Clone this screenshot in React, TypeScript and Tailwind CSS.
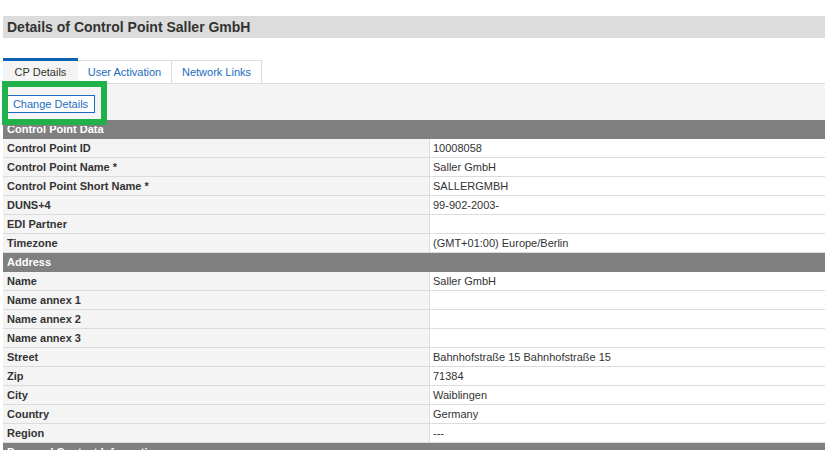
import React from "react";

interface Row {
	label: string;
	value: string;
}

interface Section {
	title: string;
	rows: Row[];
}

const sections: Section[] = [
	{
		title: "Control Point Data",
		rows: [
			{ label: "Control Point ID", value: "10008058" },
			{ label: "Control Point Name *", value: "Saller GmbH" },
			{ label: "Control Point Short Name *", value: "SALLERGMBH" },
			{ label: "DUNS+4", value: "99-902-2003-" },
			{ label: "EDI Partner", value: "" },
			{ label: "Timezone", value: "(GMT+01:00) Europe/Berlin" },
		],
	},
	{
		title: "Address",
		rows: [
			{ label: "Name", value: "Saller GmbH" },
			{ label: "Name annex 1", value: "" },
			{ label: "Name annex 2", value: "" },
			{ label: "Name annex 3", value: "" },
			{ label: "Street", value: "Bahnhofstraße 15 Bahnhofstraße 15" },
			{ label: "Zip", value: "71384" },
			{ label: "City", value: "Waiblingen" },
			{ label: "Country", value: "Germany" },
			{ label: "Region", value: "---" },
		],
	},
	{
		title: "Personal Contact Information",
		rows: [],
	},
];

const tabs = [
	{ name: "CP Details", w: "w-[75px]" },
	{ name: "User Activation", w: "w-[94px]" },
	{ name: "Network Links", w: "w-[90px]" },
];

export default function App() {
	return (
		<div
			className="relative w-[825px] h-[450px] overflow-hidden bg-white pl-[3px] pt-4 text-[11px] text-[#333]"
			style={{ fontFamily: '"Liberation Sans", Arial, sans-serif' }}
		>
			<div className="h-[22px] bg-[#dcdcdc] flex items-center pl-[4px] text-[14px] font-bold text-[#333]">
				Details of Control Point Saller GmbH
			</div>

			<div className="mt-[20px] h-[25px] flex items-end">
				{tabs.map((t, i) =>
					i === 0 ? (
						<div
							key={t.name}
							className={`${t.w} h-[25px] border-t-[3px] border-[#0a62b0] bg-[#f4f4f4] flex items-center justify-center text-[#333]`}
						>
							{t.name}
						</div>
					) : (
						<div
							key={t.name}
							className={`${t.w} h-[23px] border border-b-0 border-l-0 border-[#dcdcdc] bg-white flex items-center justify-center text-[#1a6cc0]`}
						>
							{t.name}
						</div>
					),
				)}
			</div>

			<div className="h-[37px] border-t border-[#dcdcdc] bg-[#f4f4f4] pl-[3px] pt-[11px]">
				<button className="h-[18px] w-[89px] border border-[#1a6cc0] bg-white text-[#1a6cc0] text-[11px] leading-none">
					Change Details
				</button>
			</div>

			<div>
				{sections.map((s) => (
					<div key={s.title}>
						<div className="relative h-[19px] bg-[#808080] text-white font-bold flex items-center pl-[4px] overflow-hidden">
							{s.title}
							{s.title === "Control Point Data" && (
								<div className="absolute left-0 right-0 top-0 h-[6px] bg-[#808080]" />
							)}
						</div>
						{s.rows.map((r) => (
							<div
								key={r.label}
								className="grid grid-cols-[427px_1fr] h-[19px] border-b border-[#dcdcdc]"
							>
								<div className="bg-[#f4f4f4] border-r border-[#dcdcdc] pl-[4px] flex items-center font-bold text-[#333]">
									{r.label}
								</div>
								<div className="bg-white pl-[3px] flex items-center text-[#333]">
									{r.value}
								</div>
							</div>
						))}
					</div>
				))}
			</div>

			<div className="absolute left-[2px] top-[81px] w-[105px] h-[44px] border-[6px] border-[#21b14b] pointer-events-none" />
		</div>
	);
}
